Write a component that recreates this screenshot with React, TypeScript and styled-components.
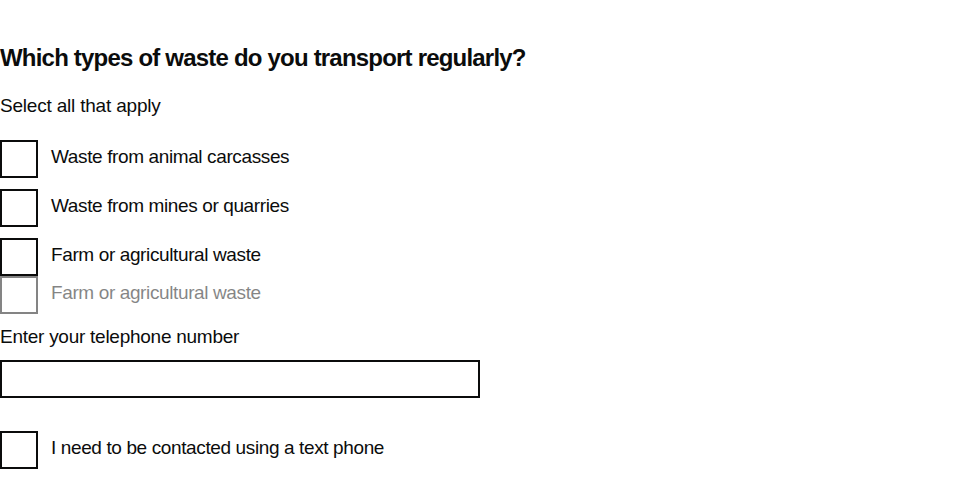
import React from "react";
import styled, { createGlobalStyle } from "styled-components";

const GlobalStyle = createGlobalStyle`
  html, body { margin: 0; padding: 0; background: #ffffff; }
  body {
    font-family: "Liberation Sans", Arial, sans-serif;
    color: #0b0c0c;
  }
`;

const Page = styled.main`
  display: flex;
  flex-direction: column;
  padding-top: 43px;
`;

const Fieldset = styled.fieldset`
  margin: 0;
  padding: 0;
  border: 0;
  display: flex;
  flex-direction: column;
`;

const Legend = styled.h1`
  margin: 0 0 20px 0;
  font-size: 24px;
  line-height: 30px;
  font-weight: 700;
  letter-spacing: -0.8px;
`;

const Hint = styled.div`
  font-size: 19px;
  line-height: 25px;
  letter-spacing: -0.2px;
  margin-bottom: 22px;
`;

const Options = styled.div`
  display: flex;
  flex-direction: column;
`;

const Choice = styled.label<{ $gap: number; $disabled?: boolean }>`
  display: flex;
  align-items: flex-start;
  margin-bottom: ${(p) => p.$gap}px;
  opacity: ${(p) => (p.$disabled ? 0.5 : 1)};
  cursor: ${(p) => (p.$disabled ? "default" : "pointer")};
`;

const Box = styled.input.attrs({ type: "checkbox" })`
  appearance: none;
  -webkit-appearance: none;
  box-sizing: border-box;
  margin: 0;
  width: 38px;
  height: 38px;
  flex: 0 0 38px;
  border: 2px solid #0b0c0c;
  background: #ffffff;
`;

const ChoiceText = styled.span`
  font-size: 19px;
  line-height: 25px;
  letter-spacing: -0.38px;
  padding: 4px 0 0 13px;
`;

const FieldLabel = styled.label`
  display: block;
  font-size: 19px;
  line-height: 25px;
  letter-spacing: -0.26px;
  margin: 10px 0 11px;
`;

const TextInput = styled.input`
  box-sizing: border-box;
  width: 480px;
  height: 38px;
  margin: 0 0 33px 0;
  padding: 5px 4px 4px;
  border: 2px solid #0b0c0c;
  border-radius: 0;
  font-family: inherit;
  font-size: 19px;
  color: #0b0c0c;
  outline: none;
`;

const options = [
  { label: "Waste from animal carcasses", gap: 11 },
  { label: "Waste from mines or quarries", gap: 11 },
  { label: "Farm or agricultural waste", gap: 0 },
  { label: "Farm or agricultural waste", gap: 0, disabled: true },
];

export default function App() {
  return (
    <>
      <GlobalStyle />
      <Page>
        <Fieldset>
          <Legend>Which types of waste do you transport regularly?</Legend>
          <Hint>Select all that apply</Hint>
          <Options>
            {options.map((o, i) => (
              <Choice key={i} $gap={o.gap} $disabled={o.disabled}>
                <Box disabled={o.disabled} />
                <ChoiceText>{o.label}</ChoiceText>
              </Choice>
            ))}
          </Options>
        </Fieldset>
        <FieldLabel htmlFor="telephone">Enter your telephone number</FieldLabel>
        <TextInput id="telephone" type="tel" />
        <Choice $gap={0}>
          <Box />
          <ChoiceText>I need to be contacted using a text phone</ChoiceText>
        </Choice>
      </Page>
    </>
  );
}
